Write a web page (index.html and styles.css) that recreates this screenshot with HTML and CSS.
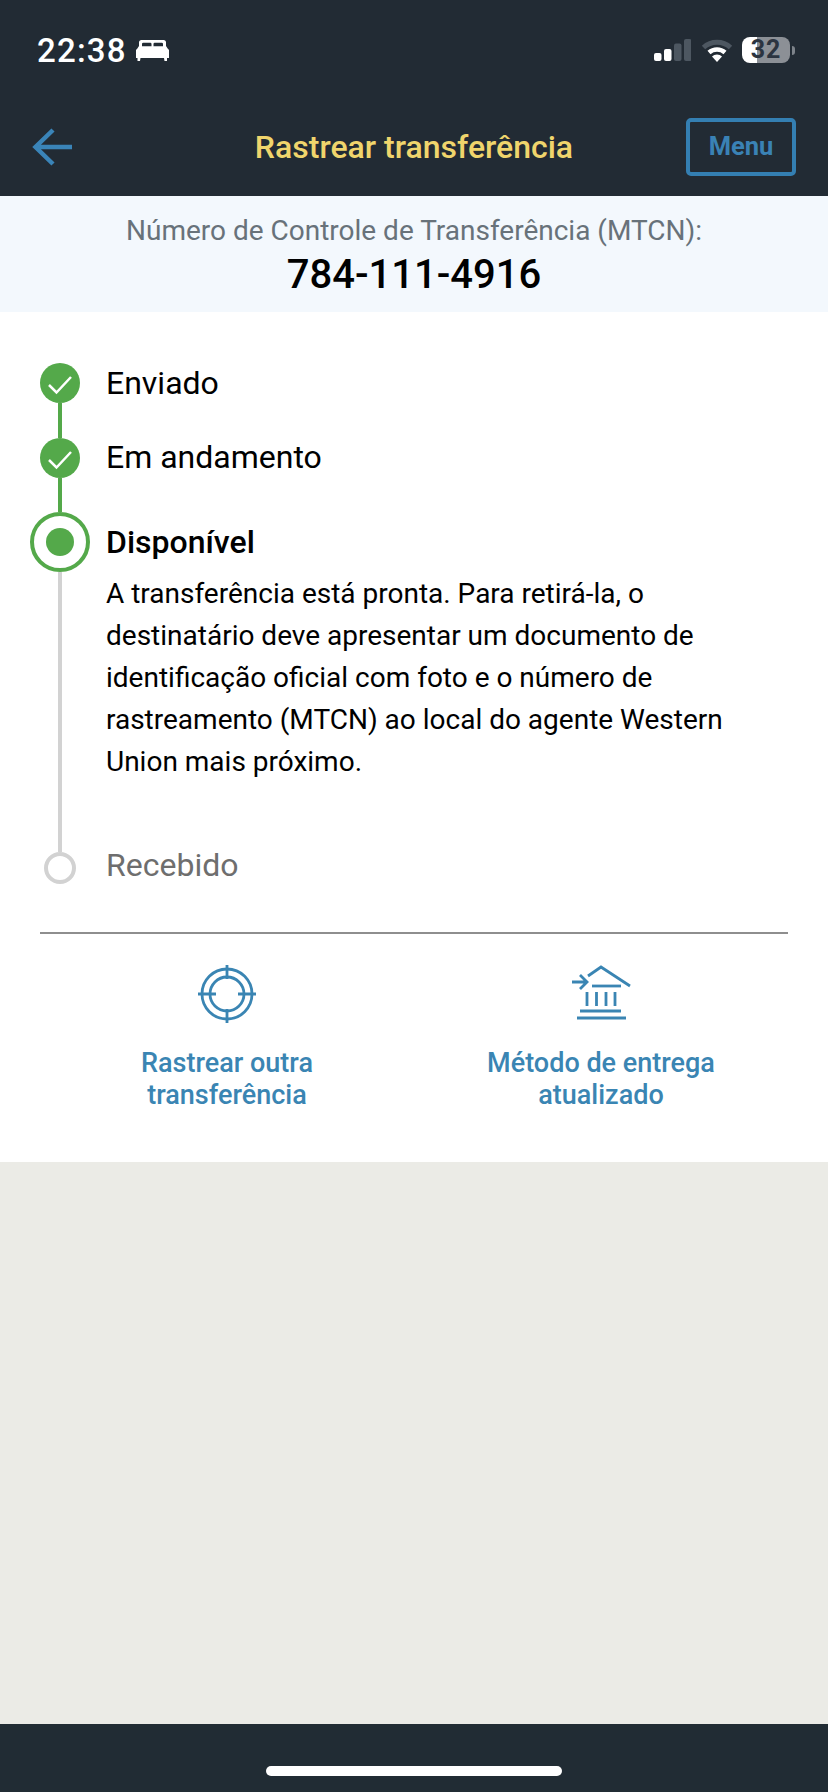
FILE: index.html
```html
<!DOCTYPE html>
<html lang="pt-BR">
<head>
<meta charset="utf-8">
<title>Rastrear transferência</title>
<link rel="stylesheet" href="styles.css">
</head>
<body>
<div class="app">
  <header class="top">
    <div class="status">
      <div class="status-left">
        <span class="clock">22:38</span>
        <svg class="bed" viewBox="0 0 33 21" aria-hidden="true">
          <path class="glyph" d="M3 2.500A2.500 2.500 0 0 1 5.500 0h22A2.500 2.500 0 0 1 30 2.500V6l2 3a2 2 0 0 1 1 2v7h-2v3h-2.500l-.5-3H4.500l-.5 3H1.500v-3H0v-7a2 2 0 0 1 1-2l2-3z"/>
          <path class="cut" d="M6 6.200V4a1.200 1.200 0 0 1 1.200-1.200h7.100A1.200 1.200 0 0 1 15.500 4v2.200zM17.500 6.200V4a1.200 1.200 0 0 1 1.200-1.200h7.100A1.200 1.200 0 0 1 27 4v2.200z"/>
        </svg>
      </div>
      <div class="status-right">
        <svg class="signal" viewBox="0 0 37 22" aria-hidden="true">
          <rect class="on" x="0" y="14" width="7.500" height="8" rx="2"/>
          <rect class="on" x="10" y="10" width="7.500" height="12" rx="2"/>
          <rect class="off" x="20" y="4.500" width="7.500" height="17.500" rx="2"/>
          <rect class="off" x="30" y="0" width="7.500" height="22" rx="2"/>
        </svg>
        <svg class="wifi" viewBox="0 0 32 23" aria-hidden="true">
          <path class="arc-off" d="M2.500 8.500a20 20 0 0 1 27 0"/>
          <path class="arc-on" d="M8 13.500a12 12 0 0 1 16 0"/>
          <path class="dot-on" d="M11 17.500a7 7 0 0 1 10 0l-5 5.500z"/>
        </svg>
        <div class="battery">
          <span class="battery-level">32</span>
          <span class="battery-nub"></span>
        </div>
      </div>
    </div>
    <nav class="nav">
      <svg class="back" viewBox="0 0 40 40" aria-hidden="true">
        <path d="M40 20H4M21 3 3.500 20 21 37"/>
      </svg>
      <h1 class="title">Rastrear transferência</h1>
      <button class="menu" type="button">Menu</button>
    </nav>
  </header>

  <section class="mtcn">
    <p class="mtcn-label">Número de Controle de Transferência (MTCN):</p>
    <p class="mtcn-value">784-111-4916</p>
  </section>

  <main class="card">
    <ol class="timeline">
      <li class="step step-sent">
        <div class="rail">
          <span class="dot">
            <svg class="check" viewBox="0 0 26 20" aria-hidden="true"><path d="M2 10l7.500 7.500L24 2"/></svg>
          </span>
          <span class="wire done"></span>
        </div>
        <div class="step-body"><span class="step-name">Enviado</span></div>
      </li>
      <li class="step step-progress">
        <div class="rail">
          <span class="dot">
            <svg class="check" viewBox="0 0 26 20" aria-hidden="true"><path d="M2 10l7.500 7.500L24 2"/></svg>
          </span>
          <span class="wire done"></span>
        </div>
        <div class="step-body"><span class="step-name">Em andamento</span></div>
      </li>
      <li class="step step-current">
        <div class="rail">
          <span class="ring"><span class="ring-core"></span></span>
          <span class="wire"></span>
        </div>
        <div class="step-body">
          <span class="step-name strong">Disponível</span>
          <p class="step-text">A transferência está pronta. Para retirá-la, o destinatário deve apresentar um documento de identificação oficial com foto e o número de rastreamento (MTCN) ao local do agente Western Union mais próximo.</p>
        </div>
      </li>
      <li class="step step-last">
        <div class="rail"><span class="hollow"></span></div>
        <div class="step-body"><span class="step-name muted">Recebido</span></div>
      </li>
    </ol>

    <div class="actions">
      <a class="action">
        <svg class="action-icon" viewBox="0 0 64 64" aria-hidden="true">
          <circle cx="32" cy="32" r="25"/>
          <circle cx="32" cy="32" r="17"/>
          <path d="M32 3v14M32 47v14M3 32h18M43 32h18"/>
        </svg>
        <span class="action-label">Rastrear outra<br>transferência</span>
      </a>
      <a class="action">
        <svg class="action-icon" viewBox="0 0 64 64" aria-hidden="true">
          <path d="M19 14 32 5l29 19"/>
          <path d="M3 20h15M11 13l7 7-7 7"/>
          <path d="M23 24h29"/>
          <path d="M18 30v14M27.500 30v14M37 30v14M46 30v14"/>
          <path d="M11 49h41M8 56h49"/>
        </svg>
        <span class="action-label">Método de entrega<br>atualizado</span>
      </a>
    </div>
  </main>

  <div class="filler"></div>

  <footer class="bottom"><span class="home-bar"></span></footer>
</div>
</body>
</html>
```
FILE: styles.css
```css
* { box-sizing: border-box; }

html, body {
  margin: 0;
  padding: 0;
  height: 100%;
}

body {
  font-family: Roboto, "Liberation Sans", sans-serif;
  background: #ebebe6;
}

.app {
  display: flex;
  flex-direction: column;
  width: 828px;
  height: 1792px;
  overflow: hidden;
}

/* Header: system status and navigation */
.top { background: #222b34; height: 196px; flex: none; }

.status {
  display: flex;
  align-items: center;
  justify-content: space-between;
  height: 98px;
  padding: 2px 33px 0 37px;
}

.status-left, .status-right { display: flex; align-items: center; }

.clock {
  color: #fff;
  font: 500 33px/1 Roboto, sans-serif;
  letter-spacing: 1.2px;
}

.bed { width: 33px; height: 21px; margin-left: 9px; }
.bed .glyph { fill: #fff; }
.bed .cut { fill: #222b34; }

.signal { width: 37px; height: 22px; }
.signal .on { fill: #fff; }
.signal .off { fill: #4d5761; }

.wifi { width: 32px; height: 23px; margin-left: 10px; fill: none; }
.wifi .arc-off { stroke: #4d5761; stroke-width: 5; }
.wifi .arc-on { stroke: #fff; stroke-width: 4.500; }
.wifi .dot-on { fill: #fff; }

.battery {
  display: flex;
  align-items: center;
  margin-left: 9px;
}

.battery-level {
  display: block;
  width: 48px;
  height: 26px;
  border-radius: 8px;
  background: linear-gradient(90deg, #fff 0 15px, #8c9096 15px);
  color: #2b3440;
  font: 700 25px/26px Roboto, sans-serif;
  letter-spacing: 1px;
  text-align: center;
}

.battery-nub {
  width: 3px;
  height: 9px;
  margin-left: 2px;
  border-radius: 0 3px 3px 0;
  background: #7d838a;
}

.nav {
  display: grid;
  grid-template-columns: 1fr auto 1fr;
  align-items: center;
  height: 98px;
  padding: 0 32px;
}

.back {
  width: 40px;
  height: 40px;
  fill: none;
  stroke: #3a84b8;
  stroke-width: 4.500;
}

.title {
  margin: 0;
  color: #f0d56c;
  font-size: 32px;
  font-weight: 500;
  line-height: 1;
  white-space: nowrap;
}

.menu {
  justify-self: end;
  width: 110px;
  height: 58px;
  padding: 0;
  border: 4px solid #347fb2;
  border-radius: 5px;
  background: transparent;
  color: #3a82b5;
  font: 700 25.500px/1 Roboto, sans-serif;
}

/* Tracking number band */
.mtcn {
  flex: none;
  height: 116px;
  padding-top: 18px;
  background: #f3f8fd;
  text-align: center;
}

.mtcn p { margin: 0; }

.mtcn .mtcn-value {
  margin-top: 3px;
  color: #000;
  font-size: 40px;
  font-weight: 500;
  line-height: 48px;
}

.mtcn-label {
  color: #68727a;
  font-size: 28px;
  line-height: 34px;
}

/* Status timeline */
.card {
  flex: none;
  height: 850px;
  background: #fff;
  padding: 51px 40px 0;
}

.timeline {
  margin: 0 0 0 -10px;
  padding: 0;
  list-style: none;
}

.step {
  display: grid;
  grid-template-columns: 60px 1fr;
  column-gap: 16px;
}

.step-sent { height: 75px; }
.step-progress { height: 74px; }
.step-current { height: 340px; }
.step-last { height: 32px; }

.rail {
  display: flex;
  flex-direction: column;
  align-items: center;
}

.dot {
  display: flex;
  align-items: center;
  justify-content: center;
  flex: none;
  width: 40px;
  height: 40px;
  border-radius: 50%;
  background: #54a94a;
}

.check {
  width: 26px;
  height: 20px;
  margin-top: 3px;
  fill: none;
  stroke: #fff;
  stroke-width: 2.500;
}

.wire {
  flex: 1;
  width: 4px;
  background: #d2d2d2;
}

.wire.done { background: #54a94a; }

.ring {
  display: flex;
  align-items: center;
  justify-content: center;
  flex: none;
  width: 60px;
  height: 60px;
  border: 4px solid #54a94a;
  border-radius: 50%;
}

.ring-core {
  width: 28px;
  height: 28px;
  border-radius: 50%;
  background: #54a94a;
}

.hollow {
  flex: none;
  width: 32px;
  height: 32px;
  border: 4px solid #d2d2d2;
  border-radius: 50%;
}

.step-name {
  display: block;
  color: #000;
  font-size: 32px;
  line-height: 40px;
}

.step-progress .step-name { margin-top: -1px; }

.step-name.strong {
  height: 60px;
  font-weight: 500;
  line-height: 60px;
}

.step-name.muted {
  margin-top: -7px;
  color: #6e6e6e;
  line-height: 40px;
}

.step-text {
  margin: 1px 0 0;
  color: #000;
  font-size: 28px;
  line-height: 42px;
}

/* Follow-up actions */
.actions {
  display: grid;
  grid-template-columns: 1fr 1fr;
  margin-top: 48px;
  padding-top: 28px;
  border-top: 2px solid #8e8e8e;
}

.action {
  display: flex;
  flex-direction: column;
  align-items: center;
}

.action-icon {
  width: 64px;
  height: 64px;
  fill: none;
  stroke: #3a85b3;
  stroke-width: 2.800;
}

.action-label {
  margin-top: 21px;
  color: #3a85b3;
  font-size: 27px;
  font-weight: 500;
  line-height: 32px;
  text-align: center;
}

.filler { flex: 1; background: #ebebe6; }

.bottom {
  display: flex;
  justify-content: center;
  flex: none;
  height: 68px;
  padding-top: 42px;
  background: #212c34;
}

.home-bar {
  width: 296px;
  height: 10px;
  border-radius: 5px;
  background: #fff;
}
```
